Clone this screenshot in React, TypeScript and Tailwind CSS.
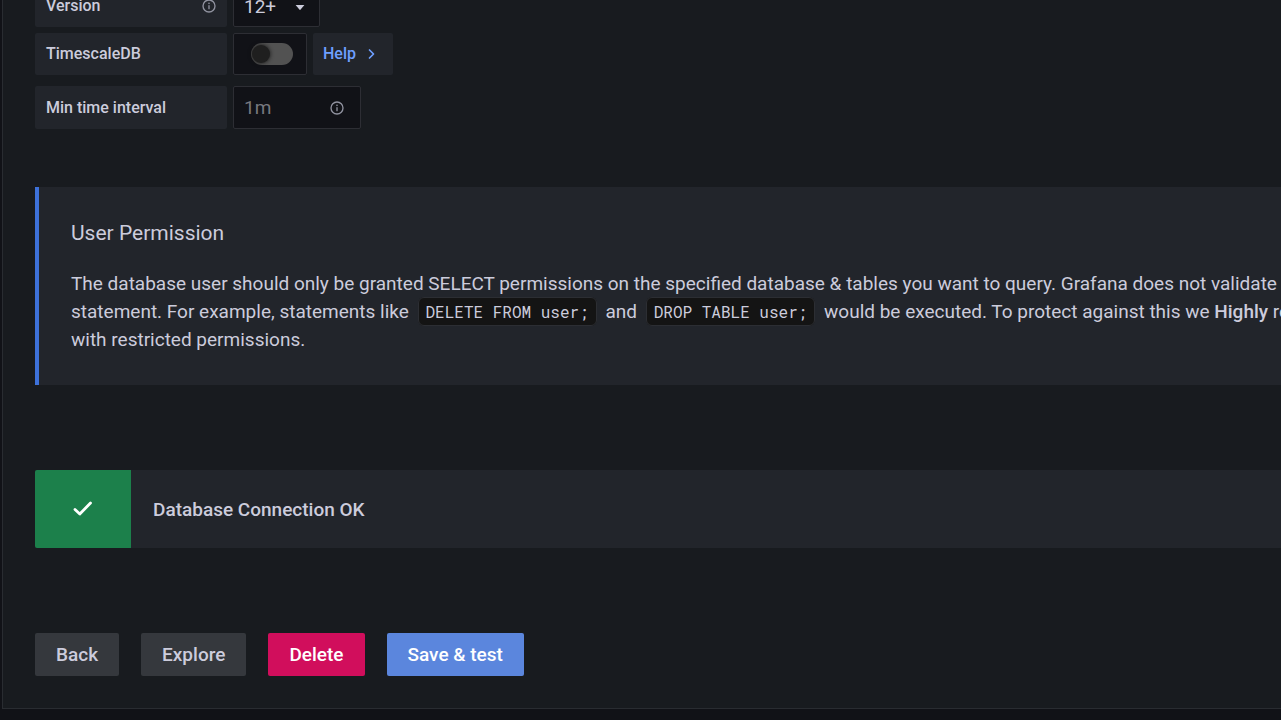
import type { ReactNode } from "react";

function InfoIcon() {
  return (
    <svg viewBox="0 0 24 24" className="size-4 shrink-0" fill="currentColor" aria-hidden="true">
      <path d="M12 2a10 10 0 1 0 10 10A10 10 0 0 0 12 2Zm0 18a8 8 0 1 1 8-8 8 8 0 0 1-8 8Zm0-9.500a1 1 0 0 0-1 1V16a1 1 0 0 0 2 0v-4.500a1 1 0 0 0-1-1Zm0-3.750a1.250 1.250 0 1 0 1.250 1.250A1.250 1.250 0 0 0 12 6.750Z" />
    </svg>
  );
}

function FieldLabel({ htmlFor, children, info }: { htmlFor: string; children: ReactNode; info?: boolean }) {
  return (
    <label
      htmlFor={htmlFor}
      className="flex w-48 items-center justify-between rounded-xs bg-[#22252b] pr-[10px] pl-[11px] text-base font-medium"
    >
      {children}
      {info && (
        <span className="text-[#9193a0]">
          <InfoIcon />
        </span>
      )}
    </label>
  );
}

function Code({ children }: { children: ReactNode }) {
  return (
    <code className="mx-1 rounded-md border border-[#2c2e33] bg-[#141414] px-[7px] py-[3px] font-['Roboto_Mono','Liberation_Mono',monospace] text-base">
      {children}
    </code>
  );
}

export default function App() {
  return (
    <div className="min-h-screen overflow-hidden bg-[#111217] font-[Roboto,sans-serif] text-[19px] leading-7 text-[#ccccdc]">
      <main className="-mt-4 ml-[2px] border-b border-l border-[#292c31] bg-[#181b1f] pb-8 pl-8">
        <form>
          <div className="flex h-[43px] gap-[6px]">
            <FieldLabel htmlFor="version" info>
              Version
            </FieldLabel>
            <div className="relative flex w-[87px]">
              <select
                id="version"
                className="w-full appearance-none rounded-xs border border-[#2d2e34] bg-[#111217] px-[10px] pt-[2px]"
                defaultValue="12+"
              >
                <option>12+</option>
              </select>
              <svg
                viewBox="0 0 10 5"
                className="pointer-events-none absolute top-[21px] right-[15px] h-[5px] w-[10px]"
                fill="currentColor"
                aria-hidden="true"
              >
                <path d="M.6 0h8.800L5.400 4.700a.6.6 0 0 1-.8 0Z" />
              </svg>
            </div>
          </div>

          <div className="mt-[6px] flex h-[42px] gap-[6px]">
            <FieldLabel htmlFor="timescale">TimescaleDB</FieldLabel>
            <div className="flex w-[74px] items-center justify-end rounded-xs border border-[#2d2e34] bg-[#111217] pr-[13px]">
              <input
                id="timescale"
                type="checkbox"
                role="switch"
                className="h-[22px] w-[42px] appearance-none rounded-full bg-[#525252] before:block before:size-[18px] before:translate-x-px before:translate-y-[2px] before:rounded-full before:bg-[#1f1f1f] before:shadow-[0_0_4px_#111]"
              />
            </div>
            <button
              type="button"
              className="flex w-20 items-center gap-[7px] rounded-xs bg-[#22252b] pl-[10px] text-base font-medium text-[#6e9fff]"
            >
              Help
              <svg viewBox="0 0 16 16" className="size-4" fill="none" stroke="currentColor" strokeWidth="1.700" strokeLinecap="round" strokeLinejoin="round" aria-hidden="true">
                <path d="m6.500 4 4 4-4 4" />
              </svg>
            </button>
          </div>

          <div className="mt-[11px] flex h-[43px] gap-[6px]">
            <FieldLabel htmlFor="interval">Min time interval</FieldLabel>
            <div className="flex w-32 items-center rounded-xs border border-[#2d2e34] bg-[#111217] pr-[15px] pl-[10px]">
              <input
                id="interval"
                type="text"
                placeholder="1m"
                className="w-full min-w-0 bg-transparent outline-none placeholder:text-[#77787f]"
              />
              <span className="text-[#9193a0]">
                <InfoIcon />
              </span>
            </div>
          </div>
        </form>

        <section className="mt-[58px] overflow-hidden border-l-4 border-[#3d71d9] bg-[#22252b] px-8 pt-8 pb-[31px]">
          <h4 className="text-[21px] leading-7">User Permission</h4>
          <p className="mt-[23px] whitespace-nowrap">
            The database user should only be granted SELECT permissions on the specified database &amp; tables you want to
            query. Grafana does not validate
            <br />
            statement. For example, statements like <Code>DELETE FROM user;</Code> and <Code>DROP TABLE user;</Code> would
            be executed. To protect against this we <strong className="font-medium">Highly</strong> recommend
            <br />
            with restricted permissions.
          </p>
        </section>

        <div role="status" className="mt-[85px] flex h-[78px] overflow-hidden rounded-l-xs bg-[#22252b] font-medium">
          <div className="flex w-24 items-center justify-center bg-[#1c804b] text-white">
            <svg viewBox="0 0 32 32" className="size-8" fill="none" stroke="currentColor" strokeWidth="2.800" strokeLinecap="round" strokeLinejoin="round" aria-hidden="true">
              <path d="m8 16.500 4.800 4.500 10.700-11" />
            </svg>
          </div>
          <p className="self-center pt-[2px] pl-[22px]">Database Connection OK</p>
        </div>

        <div className="mt-[85px] flex gap-[22px] font-medium">
          <button type="button" className="h-[43px] rounded-xs bg-[#35383d] px-[21px]">
            Back
          </button>
          <button type="button" className="h-[43px] rounded-xs bg-[#35383d] px-[21px]">
            Explore
          </button>
          <button type="button" className="h-[43px] rounded-xs bg-[#d10e5c] px-[21px] text-white">
            Delete
          </button>
          <button type="submit" className="h-[43px] rounded-xs bg-[#5b86dd] px-[21px] text-white">
            Save &amp; test
          </button>
        </div>
      </main>
    </div>
  );
}
